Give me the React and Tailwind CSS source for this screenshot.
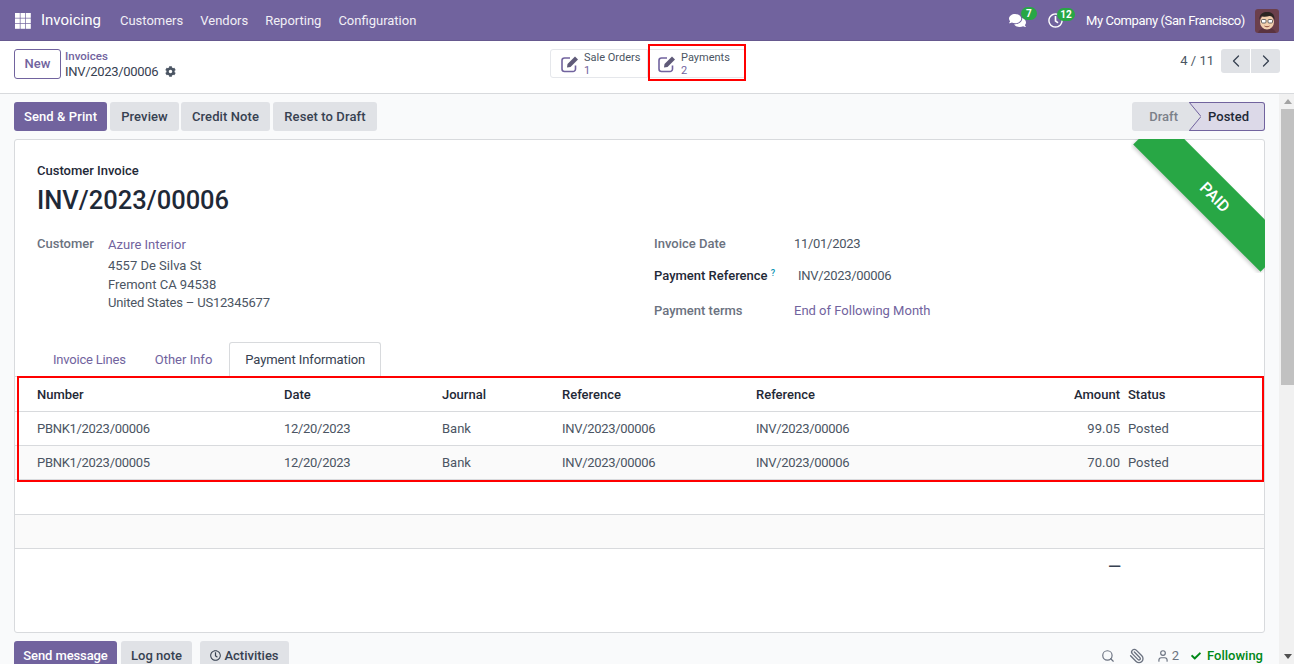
import { ChevronLeft, ChevronRight, Search, Paperclip, User } from 'lucide-react';
import { FaCog, FaComments, FaRegClock, FaCheck } from 'react-icons/fa';

const navItems = ['Customers', 'Vendors', 'Reporting', 'Configuration'];

const payments = [
  { number: 'PBNK1/2023/00006', amount: '99.05', alt: false },
  { number: 'PBNK1/2023/00005', amount: '70.00', alt: true },
];

function AppsIcon() {
  return (
    <svg width="16" height="16" viewBox="0 0 16 16" fill="#fff">
      {[0, 5.5, 11].map((y) =>
        [0, 5.5, 11].map((x) => <rect key={`${x}-${y}`} x={x} y={y} width="4.8" height="4.8" />)
      )}
    </svg>
  );
}

function Avatar() {
  return (
    <svg width="24" height="24" viewBox="0 0 24 24" className="rounded-[3px]">
      <rect width="24" height="24" fill="#6b3f4c" />
      <path d="M3 24c1-4 5-5 9-5s8 1 9 5z" fill="#5a3340" />
      <ellipse cx="12" cy="13" rx="7" ry="7.5" fill="#f3cfae" />
      <path d="M4.5 11C4 5 8 3 12.5 3S20 6 19.5 11c-1-3-3-4-5-4-3 1-7 1-8 0-1 1-1.500 2-2 4z" fill="#2b2523" />
      <rect x="6.500" y="10.500" width="4.500" height="3.500" rx="1" fill="#fff" stroke="#444" strokeWidth=".8" />
      <rect x="13" y="10.500" width="4.500" height="3.500" rx="1" fill="#fff" stroke="#444" strokeWidth=".8" />
      <path d="M9.500 17c1.500 1 3.500 1 5 0" stroke="#8a4a3a" fill="none" />
    </svg>
  );
}

function EditIcon() {
  return (
    <svg width="20" height="20" viewBox="0 0 20 20" className="shrink-0">
      <path d="M15.500 11.500V15a2.500 2.500 0 0 1-2.500 2.500H4.500A2.500 2.500 0 0 1 2 15V6.500A2.500 2.500 0 0 1 4.500 4H10" fill="none" stroke="#71639e" strokeWidth="1.600" />
      <path d="M7.500 10 L15 2.500 L18 5.500 L10.500 13 L7 13.500 Z" fill="#5f5a78" />
    </svg>
  );
}

function Badge({ children, className }) {
  return (
    <span className={`absolute flex h-[13px] items-center justify-center rounded-full bg-[#28a745] text-[10px] font-bold text-white ${className}`}>
      {children}
    </span>
  );
}

function StatButton({ label, value, className }) {
  return (
    <button type="button" className={`flex h-[29px] w-[98px] items-center gap-[4px] border border-[#e5e7eb] bg-white pl-[9px] text-left ${className}`}>
      <EditIcon />
      <span className="block whitespace-nowrap text-[11px] leading-[13px] text-[#4b5563]">
        {label}
        <br />
        <span className="text-[#71639e]">{value}</span>
      </span>
    </button>
  );
}

function Field({ label, bold, children, className }) {
  return (
    <div className={`flex ${className}`}>
      <span className={`w-[140px] shrink-0 ${bold ? 'font-medium text-[#1f2937]' : 'font-medium text-[#6b7280]'}`}>{label}</span>
      {children}
    </div>
  );
}

export default function App() {
  return (
    <div className="flex h-[664px] w-[1294px] flex-col overflow-hidden bg-white font-['Roboto',sans-serif] text-[13px] text-[#4b5563]">
      <header className="flex h-[41px] shrink-0 items-center border-b border-[#66598f] bg-[#71639e] pt-px text-white">
        <div className="ml-[15px]"><AppsIcon /></div>
        <span className="ml-[10px] text-[15px]">Invoicing</span>
        <nav className="ml-[19px] flex gap-[17px] text-[#f1eff6]">
          {navItems.map((item) => <span key={item}>{item}</span>)}
        </nav>
        <div className="relative ml-auto flex items-center">
          <div className="relative mr-[22px]">
            <FaComments className="h-[17px] w-[17px]" />
            <Badge className="-top-[5px] left-[12px] w-[16px]">7</Badge>
          </div>
          <div className="relative mr-[23px]">
            <FaRegClock className="h-[15px] w-[15px]" />
            <Badge className="-top-[5px] left-[9px] w-[18px]">12</Badge>
          </div>
          <span className="mr-[10px] tracking-[-0.4px]">My Company (San Francisco)</span>
          <div className="mr-[15px] h-6"><Avatar /></div>
        </div>
      </header>

      <div className="relative flex h-[53px] shrink-0 border-b border-[#d8dadd] bg-white">
        <div className="flex w-[550px] shrink-0">
          <button type="button" className="ml-[14px] mt-[8px] h-[30px] w-[47px] rounded-[3px] border border-[#71639e] font-medium text-[#71639e]">New</button>
          <div className="ml-[4px] mt-[8px] leading-[15px]">
            <div className="text-[11.500px] font-medium text-[#71639e]">Invoices</div>
            <div className="flex items-center gap-[7px] tracking-[-0.3px] text-[#374151]">
              INV/2023/00006
              <FaCog className="h-[11px] w-[11px] text-[#4b5563]" />
            </div>
          </div>
        </div>
        <div className="mt-[8px] flex">
          <StatButton label="Sale Orders" value="1" className="rounded-l-[3px]" />
          <StatButton label="Payments" value="2" className="rounded-r-[3px] border-l-0" />
        </div>
        <div className="absolute left-[648px] top-[3px] h-[37px] w-[98px] border-2 border-[#f00]" />
        <div className="ml-auto mr-[14px] mt-[8px] flex h-6 items-center">
          <span className="mr-[7px] text-[#4b5563]">4 / 11</span>
          <button type="button" className="flex h-6 w-[29px] items-center justify-center rounded-l-[3px] bg-[#e0e2e6] text-[#374151]"><ChevronLeft size={20} strokeWidth={1.5} /></button>
          <button type="button" className="ml-px flex h-6 w-[29px] items-center justify-center rounded-r-[3px] bg-[#e0e2e6] text-[#374151]"><ChevronRight size={20} strokeWidth={1.5} /></button>
        </div>
      </div>

      <div className="flex min-h-0 flex-1">
        <main className="w-[1279px] shrink-0 bg-[#f9fafb] pl-[14px] pr-[14px] pt-2">
          <div className="flex h-[29px] items-center justify-between font-medium">
            <div className="flex tracking-[0.1px]">
              <button type="button" className="h-[29px] w-[93px] rounded-[3px] bg-[#71639e] text-white">Send &amp; Print</button>
              <button type="button" className="ml-[3px] h-[29px] w-[69px] rounded-[3px] bg-[#e0e2e6] text-[#374151]">Preview</button>
              <button type="button" className="ml-[2px] h-[29px] w-[89px] rounded-[3px] bg-[#e0e2e6] text-[#374151]">Credit Note</button>
              <button type="button" className="ml-[3px] h-[29px] w-[104px] rounded-[3px] bg-[#e0e2e6] text-[#374151]">Reset to Draft</button>
            </div>
            <div className="flex h-[29px]">
              <span className="flex w-[58px] items-center justify-end rounded-l-[3px] bg-[#e0e2e6] pr-[12px] text-[#7b8089]">Draft</span>
              <div className="relative flex w-[75px] items-center justify-end rounded-r-[3px] border border-l-0 border-[#71639e] bg-[#dcd9e8] pr-[15px] text-[#1f2937]">
                Posted
                <svg className="absolute -left-px -top-px" width="12" height="29" viewBox="0 0 12 29">
                  <path d="M0 0 L12 14.500 L0 29 Z" fill="#e0e2e6" stroke="none" />
                  <path d="M0 0 L12 14.500 L0 29" fill="none" stroke="#71639e" />
                </svg>
              </div>
            </div>
          </div>

          <section className="relative mt-2 h-[494px] rounded-[3px] border border-[#d8dadd] bg-white">
            <div className="absolute -right-px -top-px h-[134px] w-[134px] overflow-hidden">
              <div className="absolute left-[-10px] top-[35px] flex h-[40px] w-[180px] rotate-45 items-center justify-center bg-[#28a745] pl-[10px] text-[16px] font-medium text-white shadow-[0_2px_4px_rgba(0,0,0,0.2)]">
                PAID
              </div>
            </div>

            <div className="px-[22px] pt-[21px]">
              <div className="font-medium leading-5 text-[#1f2937]">Customer Invoice</div>
              <h1 className="mt-px text-[25.500px] font-medium leading-9 text-[#1f2937]">INV/2023/00006</h1>
              <div className="mt-[16px] flex h-[109px]">
                <div className="flex w-[617px] shrink-0">
                  <span className="w-[71px] shrink-0 font-medium text-[#6b7280]">Customer</span>
                  <div className="text-[#4b5563]">
                    <div className="mt-px leading-5 text-[#71639e]">Azure Interior</div>
                    <div className="mt-px leading-[19px]">4557 De Silva St</div>
                    <div className="leading-[19px]">Fremont CA 94538</div>
                    <div className="leading-[18px] tracking-[-0.2px]">United States – US12345677</div>
                  </div>
                </div>
                <div>
                  <Field label="Invoice Date" className="h-[32px] leading-5"><span className="tracking-[-0.3px]">11/01/2023</span></Field>
                  <Field
                    bold
                    label={<>Payment Reference <sup className="text-[9px] text-[#0891b2]">?</sup></>}
                    className="h-[35px] leading-5"
                  >
                    <span className="ml-[4px] tracking-[-0.3px]">INV/2023/00006</span>
                  </Field>
                  <Field label="Payment terms" className="leading-5">
                    <span className="text-[#71639e]">End of Following Month</span>
                  </Field>
                </div>
              </div>
            </div>

            <div className="flex h-[33px] items-end pl-[22px]">
              <span className="flex h-[33px] items-center pl-4 pr-[16px] tracking-[-0.2px] text-[#71639e]">Invoice Lines</span>
              <span className="flex h-[33px] items-center pl-[13px] pr-[17px] text-[#71639e]">Other Info</span>
              <span className="flex h-[34px] items-center rounded-t-[3px] border border-b-0 border-[#d8dadd] bg-white px-[15px] tracking-[-0.1px] text-[#374151]">Payment Information</span>
            </div>

            <div className="relative">
              <table className="w-full table-fixed border-collapse border-t border-[#d8dadd] text-left">
                <thead>
                  <tr className="h-[35px] border-b border-[#d8dadd] font-medium text-[#1f2937]">
                    <th className="w-[269px] pl-[22px] pt-px font-medium">Number</th>
                    <th className="w-[158px] pt-px font-medium">Date</th>
                    <th className="w-[120px] pt-px font-medium">Journal</th>
                    <th className="w-[194px] pt-px font-medium">Reference</th>
                    <th className="w-[364px] pt-px font-medium">Reference</th>
                    <th className="pt-px font-medium">
                      <span className="-ml-[364px] inline-block w-[364px] text-right">Amount</span>
                      <span className="ml-2">Status</span>
                    </th>
                  </tr>
                </thead>
                <tbody>
                  {payments.map((p) => (
                    <tr key={p.number} className={`h-[34px] border-b border-[#d8dadd] ${p.alt ? 'bg-[#fafafa]' : ''}`}>
                      <td className="pl-[22px] tracking-[-0.3px]">{p.number}</td>
                      <td className="tracking-[-0.3px]">12/20/2023</td>
                      <td>Bank</td>
                      <td className="tracking-[-0.3px]">INV/2023/00006</td>
                      <td className="tracking-[-0.3px]">INV/2023/00006</td>
                      <td>
                        <span className="-ml-[364px] inline-block w-[364px] text-right">{p.amount}</span>
                        <span className="ml-2">Posted</span>
                      </td>
                    </tr>
                  ))}
                </tbody>
              </table>
              <div className="absolute -bottom-[2px] left-[2px] right-0 top-0 border-2 border-[#f00]" />
            </div>

            <div className="h-[35px] border-b border-[#d8dadd]" />
            <div className="h-[34px] border-b border-[#d8dadd] bg-[#fafafa]" />
            <div className="pr-[143px] pt-[7px] text-right text-[17px] font-medium leading-5 text-[#374151]">—</div>
          </section>

          <div className="mt-2 flex items-start justify-between">
            <div className="flex font-medium">
              <button type="button" className="h-[29px] w-[103px] rounded-t-[3px] bg-[#71639e] tracking-[-0.1px] text-white">Send message</button>
              <button type="button" className="ml-[4px] h-[29px] w-[71px] rounded-t-[3px] bg-[#e0e2e6] text-[#374151]">Log note</button>
              <button type="button" className="ml-2 flex h-[29px] w-[89px] items-center justify-center gap-[3px] rounded-t-[3px] bg-[#e0e2e6] text-[#374151]">
                <FaRegClock className="h-[11px] w-[11px]" />
                Activities
              </button>
            </div>
            <div className="flex items-center pr-[2px] pt-[5px] text-[#6b7280]">
              <Search size={14} className="mr-[14px]" />
              <Paperclip size={16} className="mr-[11px] -scale-x-100" />
              <User size={14} />
              <span className="ml-[2px] mr-[12px]">2</span>
              <FaCheck className="mr-[6px] h-[10px] w-[10px] text-[#008818]" />
              <span className="font-medium text-[#008818]">Following</span>
            </div>
          </div>
        </main>

        <div className="flex w-[15px] shrink-0 flex-col items-end bg-[#f1f1f1]">
          <div className="flex h-[15px] w-[13px] items-center justify-center">
            <span className="border-x-[4px] border-b-[5px] border-x-transparent border-b-[#a3a3a3]" />
          </div>
          <div className="h-[276px] w-[13px] bg-[#c1c1c1]" />
          <div className="mt-auto flex h-[15px] w-[13px] items-center justify-center">
            <span className="border-x-[4px] border-t-[5px] border-x-transparent border-t-[#505050]" />
          </div>
        </div>
      </div>
    </div>
  );
}
